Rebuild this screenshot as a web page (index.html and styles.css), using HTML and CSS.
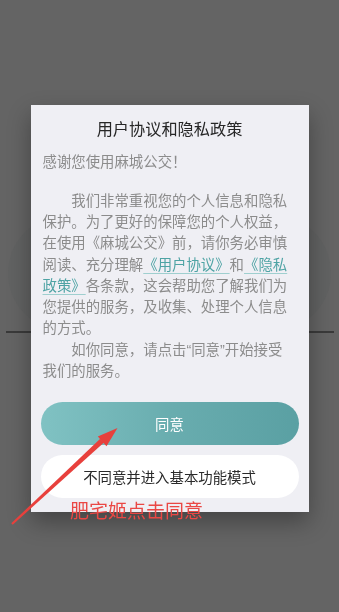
FILE: index.html
```html
<!DOCTYPE html>
<html lang="zh">
<head>
<meta charset="utf-8">
<title>用户协议和隐私政策</title>
<link rel="stylesheet" href="styles.css">
</head>
<body>
<div class="page">
  <div class="backdrop-card"></div>
  <div class="backdrop-line"></div>
</div>
<div class="overlay">
  <div class="dialog">
    <h1 class="title">用户协议和隐私政策</h1>
    <div class="body">
      <p class="greet">感谢您使用麻城公交！</p>
      <p class="para">我们非常重视您的个人信息和隐私保护。为了更好的保障您的个人权益，在使用《麻城公交》前，请你务必审慎阅读、充分理解<a class="link">《用户协议》</a>和<a class="link">《隐私</a><a class="link">政策》</a>各条款，这会帮助您了解我们为您提供的服务，及收集、处理个人信息的方式。</p>
      <p class="para">如你同意，请点击“同意”开始接受我们的服务。</p>
    </div>
    <div class="actions">
      <button class="btn btn-agree">同意</button>
      <button class="btn btn-basic">不同意并进入基本功能模式</button>
    </div>
  </div>
  <div class="note">肥宅姬点击同意</div>
  <svg class="arrow" width="339" height="612" viewBox="0 0 339 612">
    <polygon points="11.3,523.3 12.7,524.7 104.0,442.6 100.2,438.8" fill="#e8403c"/>
    <polygon points="117.5,428 97.8,436.6 106.5,446.2" fill="#e8403c"/>
  </svg>
</div>
</body>
</html>
```
FILE: styles.css
```css
* { box-sizing: border-box; }
html, body {
  margin: 0;
  padding: 0;
  width: 339px;
  height: 612px;
  overflow: hidden;
  background: #646464;
  font-family: "Liberation Sans", "Noto Sans CJK SC", sans-serif;
}
.page {
  height: 612px;
  padding-top: 215px;
}
.backdrop-card {
  height: 116px;
  margin: 0 8px;
  border-radius: 60px;
  background: #616262;
}
.backdrop-line {
  height: 2px;
  margin: 0 5px 0 6px;
  background: #3a3a3a;
}
.overlay {
  position: fixed;
  inset: 0;
  padding-top: 105px;
}
.dialog {
  width: 278px;
  margin: 0 auto;
  background: #efeff4;
  padding: 12px 10px 14px;
  box-shadow: 0 10px 22px rgba(0, 0, 0, 0.32);
}
.title {
  margin: 0;
  font-size: 16.2px;
  line-height: 24px;
  font-weight: normal;
  color: #262626;
  text-align: center;
}
.body {
  padding: 0 8px 0 2px;
  font-size: 14.4px;
  line-height: 21.25px;
  color: #8c8c8c;
}
.greet {
  margin: 10.5px 0 0;
}
.para {
  margin: 0;
  text-indent: 2em;
}
.greet + .para {
  margin-top: 18.2px;
}
.link {
  color: #4ea3a4;
  text-decoration: underline;
  text-decoration-color: #9fcfcf;
  text-underline-offset: 3px;
}
.actions {
  margin-top: 20px;
  display: flex;
  flex-direction: column;
  gap: 10px;
}
.btn {
  display: block;
  width: 100%;
  height: 43px;
  border: 0;
  border-radius: 22px;
  font-family: "Noto Sans CJK SC", sans-serif;
  font-size: 14.4px;
  padding: 0;
}
.btn-agree {
  background: linear-gradient(90deg, #80c2c3 0%, #69adaf 50%, #5aa0a3 100%);
  color: #fff;
}
.btn-basic {
  background: #fff;
  color: #2a2a2a;
}
.note {
  position: absolute;
  left: 70px;
  top: 497px;
  font-family: "Noto Sans CJK SC", sans-serif;
  font-size: 19px;
  line-height: 26px;
  color: #ea4744;
}
.arrow {
  position: absolute;
  left: 0;
  top: 0;
}
```
